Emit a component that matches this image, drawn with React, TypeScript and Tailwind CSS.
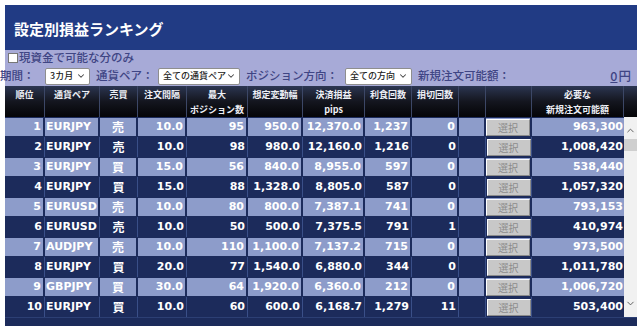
import { ChevronDown, ChevronUp } from 'lucide-react';

interface RankRow {
  rank: number;
  pair: string;
  side: '売' | '買';
  interval: string;
  maxPos: string;
  range: string;
  pips: string;
  wins: string;
  losses: string;
  required: string;
}

const rows: RankRow[] = [
  { rank: 1, pair: 'EURJPY', side: '売', interval: '10.0', maxPos: '95', range: '950.0', pips: '12,370.0', wins: '1,237', losses: '0', required: '963,300' },
  { rank: 2, pair: 'EURJPY', side: '売', interval: '10.0', maxPos: '98', range: '980.0', pips: '12,160.0', wins: '1,216', losses: '0', required: '1,008,420' },
  { rank: 3, pair: 'EURJPY', side: '買', interval: '15.0', maxPos: '56', range: '840.0', pips: '8,955.0', wins: '597', losses: '0', required: '538,440' },
  { rank: 4, pair: 'EURJPY', side: '買', interval: '15.0', maxPos: '88', range: '1,328.0', pips: '8,805.0', wins: '587', losses: '0', required: '1,057,320' },
  { rank: 5, pair: 'EURUSD', side: '売', interval: '10.0', maxPos: '80', range: '800.0', pips: '7,387.1', wins: '741', losses: '0', required: '793,153' },
  { rank: 6, pair: 'EURUSD', side: '売', interval: '10.0', maxPos: '50', range: '500.0', pips: '7,375.5', wins: '791', losses: '1', required: '410,974' },
  { rank: 7, pair: 'AUDJPY', side: '売', interval: '10.0', maxPos: '110', range: '1,100.0', pips: '7,137.2', wins: '715', losses: '0', required: '973,500' },
  { rank: 8, pair: 'EURJPY', side: '買', interval: '20.0', maxPos: '77', range: '1,540.0', pips: '6,880.0', wins: '344', losses: '0', required: '1,011,780' },
  { rank: 9, pair: 'GBPJPY', side: '買', interval: '30.0', maxPos: '64', range: '1,920.0', pips: '6,360.0', wins: '212', losses: '0', required: '1,006,720' },
  { rank: 10, pair: 'EURJPY', side: '買', interval: '10.0', maxPos: '60', range: '600.0', pips: '6,168.7', wins: '1,279', losses: '11', required: '503,400' },
];

const headers: string[][] = [
  ['順位'],
  ['通貨ペア'],
  ['売買'],
  ['注文間隔'],
  ['最大', 'ポジション数'],
  ['想定変動幅'],
  ['決済損益', 'pips'],
  ['利食回数'],
  ['損切回数'],
  [],
  [],
  ['必要な', '新規注文可能額'],
];

const gridCols = 'grid grid-cols-[40px_55px_38px_49px_61px_55px_62px_47px_47px_27px_46px_92px]';

function FakeSelect({ label, width }: { label: string; width: string }) {
  return (
    <div
      className={`${width} ml-[6px] h-[17px] flex items-center justify-between pl-[4px] pr-[3px] bg-white border border-[#8e8e8e] rounded-[2px] text-[9px] text-[#222] whitespace-nowrap overflow-hidden`}
    >
      <span>{label}</span>
      <ChevronDown size={10} strokeWidth={2.5} className="shrink-0 text-[#444]" />
    </div>
  );
}

export default function App() {
  return (
    <div
      className="w-[640px] h-[326px] bg-white overflow-hidden pt-[5px] pl-[5px]"
      style={{ fontFamily: '"DejaVu Sans", "Noto Sans CJK JP", sans-serif' }}
    >
      <div className="w-[632px]">
        {/* Title */}
        <div className="h-[45px] bg-[#213b84] flex items-center pl-[9px] pt-[3px] text-white text-[15px] font-bold font-['Noto_Sans_CJK_JP',sans-serif]">
          設定別損益ランキング
        </div>

        {/* Filters */}
        <div className="h-[36px] bg-[#a7aad7] text-[#3f4584] text-[11.5px] font-medium font-['Noto_Sans_CJK_JP',sans-serif]">
          <div className="h-[16px] flex items-center pl-[3px]">
            <span className="w-[10px] h-[10px] bg-white border border-[#777] mr-[1px]"></span>
            <span>現資金で可能な分のみ</span>
          </div>
          <div className="h-[20px] flex items-center pr-[6px]">
            <span className="-ml-[5px] w-[40px] whitespace-nowrap">期間：</span>
            <div className="-ml-[1px]">
              <FakeSelect label="3カ月" width="w-[45px]" />
            </div>
            <span className="ml-[6px] w-[56px] whitespace-nowrap">通貨ペア：</span>
            <FakeSelect label="全ての通貨ペア" width="w-[82px]" />
            <span className="ml-[6px] w-[93px] whitespace-nowrap">ポジション方向：</span>
            <FakeSelect label="全ての方向" width="w-[67px]" />
            <span className="ml-[6px] whitespace-nowrap">新規注文可能額：</span>
            <span className="flex-1"></span>
            <span className="underline text-[12.5px]">0</span>
            <span className="ml-[1px] text-[12.5px]">円</span>
          </div>
        </div>

        {/* Header */}
        <div className="flex h-[31px] bg-gradient-to-b from-[#2c3652] via-[#14161f] to-[#050507]">
          <div className={`${gridCols} w-[619px]`}>
            {headers.map((lines, i) => (
              <div
                key={i}
                className="border-r border-[#3c4766] flex flex-col items-center pt-[2px] text-[9px] leading-[14px] gap-[1px] font-bold text-[#eef0f6] whitespace-nowrap font-['Noto_Sans_CJK_JP',sans-serif]"
              >
                {lines.map((l) => (
                  <span key={l}>{l}</span>
                ))}
              </div>
            ))}
          </div>
          <div className="w-[13px]"></div>
        </div>

        {/* Body */}
        <div className="flex">
          <div className="w-[619px]">
            {rows.map((r, i) => {
              const odd = i % 2 === 0;
              const cell = odd
                ? 'bg-[#8d9cca] border-r-2 border-[#1d2c5c]'
                : 'bg-[#1c2b5b] border-r border-[#3a4f88]';
              const num = `${cell} flex items-center justify-end pr-[2px]`;
              return (
                <div
                  key={r.rank}
                  className={`${gridCols} h-[20px] bg-[#1c2b5b] ${odd ? 'py-[1px]' : ''} text-white text-[11px] font-bold whitespace-nowrap`}
                >
                  <div className={num}>{r.rank}</div>
                  <div className={`${cell} flex items-center pl-[1px]`}>{r.pair}</div>
                  <div className={`${cell} flex items-center justify-center text-[12px] font-['Noto_Sans_CJK_JP',sans-serif]`}>
                    {r.side}
                  </div>
                  <div className={num}>{r.interval}</div>
                  <div className={num}>{r.maxPos}</div>
                  <div className={num}>{r.range}</div>
                  <div className={num}>{r.pips}</div>
                  <div className={num}>{r.wins}</div>
                  <div className={num}>{r.losses}</div>
                  <div className={cell}></div>
                  <div className={`${cell} flex items-center justify-center`}>
                    <div className="w-[44px] h-[17px] flex items-center justify-center bg-[#c8c8c8] border border-t-white border-l-white border-b-[#8a8a8a] border-r-[#8a8a8a] text-[10px] font-normal text-[#8c8c8c] font-['Noto_Sans_CJK_JP',sans-serif]">
                      選択
                    </div>
                  </div>
                  <div className={`${odd ? 'bg-[#8d9cca]' : 'bg-[#1c2b5b]'} flex items-center justify-end pr-[1px]`}>
                    {r.required}
                  </div>
                </div>
              );
            })}
          </div>

          {/* Scrollbar */}
          <div className="w-[13px] h-[200px] bg-[#f1f1f1] flex flex-col items-center">
            <ChevronUp size={11} strokeWidth={2} className="mt-[8px] text-[#555]" />
            <div className="mt-[3px] w-full h-[12px] bg-[#cfcfcf]"></div>
            <div className="flex-1"></div>
            <ChevronDown size={11} strokeWidth={2} className="mb-[8px] text-[#555]" />
          </div>
        </div>

        <div className="h-[10px] bg-[#1c2b5b] border-t border-[#2c3f74]"></div>
      </div>
    </div>
  );
}
